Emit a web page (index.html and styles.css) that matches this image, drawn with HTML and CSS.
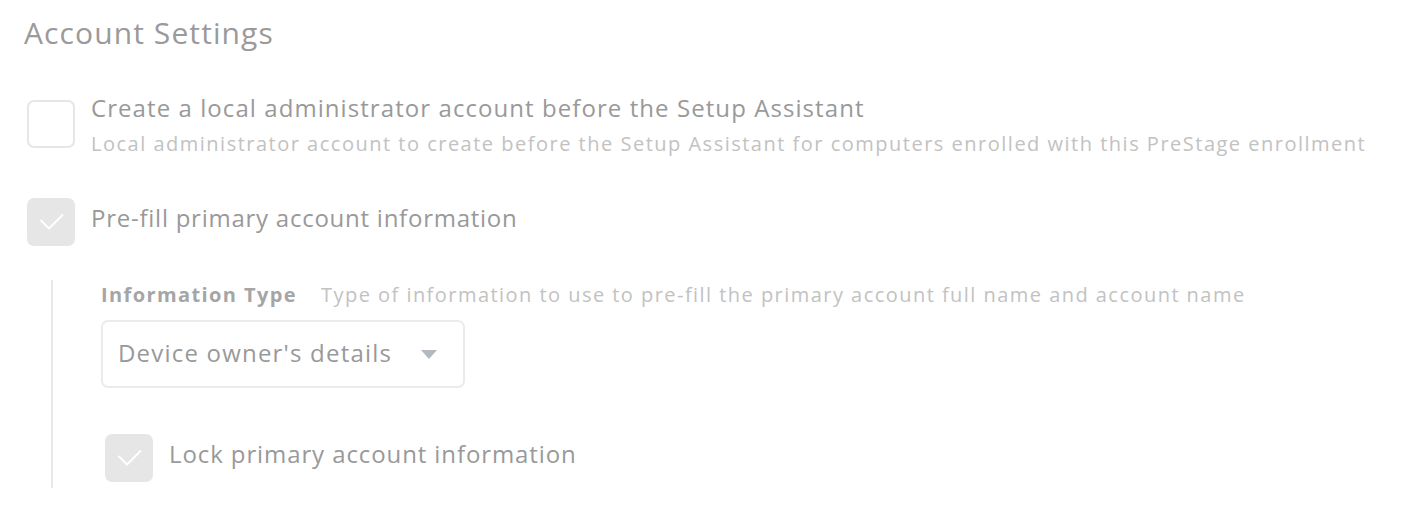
FILE: index.html
```html
<!DOCTYPE html>
<html>
<head>
<meta charset="utf-8">
<link rel="stylesheet" href="styles.css">
</head>
<body>
<div class="page">
  <h1 class="title">Account Settings</h1>

  <div class="option option-first">
    <span class="box"></span>
    <div class="option-text">
      <div class="label">Create a local administrator account before the Setup Assistant</div>
      <div class="desc">Local administrator account to create before the Setup Assistant for computers enrolled with this PreStage enrollment</div>
    </div>
  </div>

  <div class="option option-second">
    <span class="box checked">
      <svg viewBox="0 0 48 48" width="48" height="48"><path d="M14 22.5l8 8 13.5-13.5" fill="none" stroke="#fff" stroke-width="2" stroke-linecap="round" stroke-linejoin="round"/></svg>
    </span>
    <div class="option-text">
      <div class="label">Pre-fill primary account information</div>
    </div>
  </div>

  <div class="nested">
    <div class="field-head">
      <span class="field-name">Information Type</span>
      <span class="field-desc">Type of information to use to pre-fill the primary account full name and account name</span>
    </div>
    <div class="select">
      <span>Device owner's details</span>
      <svg class="caret" viewBox="0 0 16 10" width="16" height="10"><path d="M0 0h16L8 9z" fill="#b4b8c2"/></svg>
    </div>
    <div class="option option-lock">
      <span class="box checked">
        <svg viewBox="0 0 48 48" width="48" height="48"><path d="M14 22.5l8 8 13.5-13.5" fill="none" stroke="#fff" stroke-width="2" stroke-linecap="round" stroke-linejoin="round"/></svg>
      </span>
      <div class="option-text">
        <div class="label">Lock primary account information</div>
      </div>
    </div>
  </div>
</div>
</body>
</html>
```

FILE: styles.css
```css
* { box-sizing: border-box; }
html, body { margin: 0; padding: 0; background: #fff; }
body { font-family: "Open Sans", Lato, sans-serif; color: #999; }
.page { padding: 14px 24px 0 24px; }
.title { margin: 0; font-weight: 400; font-size: 30px; line-height: 38px; color: #9a9a9a; letter-spacing: 1.1px; }
.option { display: flex; align-items: flex-start; gap: 16px; margin-left: 3px; }
.option-first { margin-top: 48px; }
.box { width: 48px; height: 48px; flex: none; border: 2px solid #e6e6e6; border-radius: 7px; background: #fff; display: block; }
.box.checked { background: #e6e6e6; border-color: #e6e6e6; }
.box svg { display: block; margin: -2px; }
.label { font-size: 24px; line-height: 20px; color: #999; margin-top: -2px; letter-spacing: 1.07px; }
.option-second .label { letter-spacing: 0.75px; }
.option-lock .label { letter-spacing: 0.9px; }
.desc { font-size: 20px; color: #c2c2c2; margin-top: 14px; line-height: 24px; letter-spacing: 1.5px; }
.option-second { margin-top: 42px; }
.option-second .label, .option-lock .label { margin-top: 10px; line-height: 20px; }
.nested { margin: 34px 0 0 27px; border-left: 2px solid #e8e8e8; padding: 3px 0 6px 48px; }
.field-head { display: flex; gap: 24px; font-size: 20px; line-height: 24px; }
.field-name { font-weight: 700; color: #a5a5a5; letter-spacing: 1.4px; }
.field-desc { color: #c2c2c2; letter-spacing: 1.46px; }
.select { margin-top: 13px; width: 364px; height: 68px; border: 2px solid #ebebeb; border-radius: 7px; display: flex; align-items: center; padding: 0 26px 3px 15px; font-size: 24px; color: #999; justify-content: space-between; letter-spacing: 1.2px; }
.caret { display: block; margin-top: 5px; }
.option-lock { margin: 46px 0 0 4px; }
```
